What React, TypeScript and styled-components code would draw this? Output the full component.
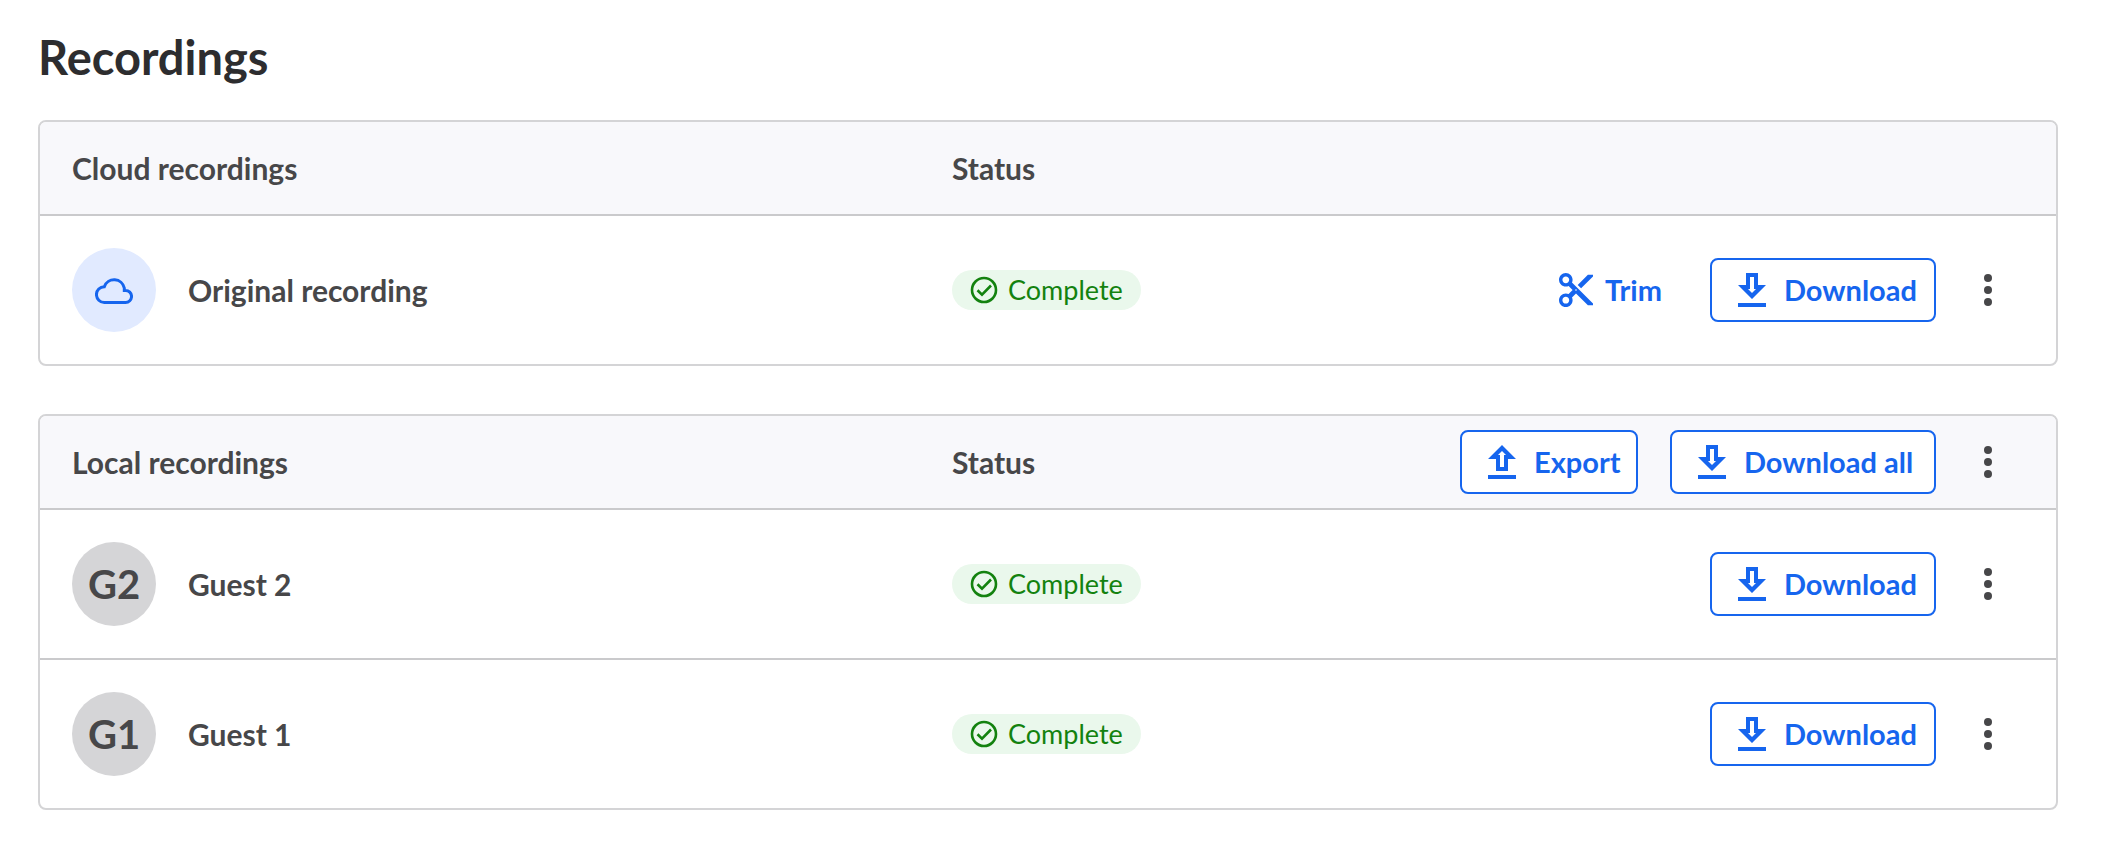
import React from "react";
import styled, { createGlobalStyle } from "styled-components";

const color = {
  blue: "#1665ee",
  blueTint: "#e1eaff",
  heading: "#2d2d2f",
  text: "#474749",
  headBg: "#f8f8fb",
  border: "#d4d4d6",
  divider: "#cacacc",
  avatar: "#d5d5d7",
  green: "#13820f",
  greenTint: "#eaf8ec",
};

const GlobalStyle = createGlobalStyle`
  *, *::before, *::after { box-sizing: border-box; }
  body {
    margin: 0;
    background: #fff;
    color: ${color.text};
    font-family: Lato, "Liberation Sans", sans-serif;
  }
`;

const Page = styled.main`
  padding: 30px 44px 44px 38px;
`;

const Title = styled.h1`
  margin: 0 0 36px;
  font-size: 47px;
  line-height: 54px;
  font-weight: 700;
  color: ${color.heading};
`;

const Sections = styled.div`
  display: flex;
  flex-direction: column;
  gap: 48px;
`;

const Card = styled.section`
  border: 2px solid ${color.border};
  border-radius: 8px;
  overflow: hidden;
`;

const Table = styled.table`
  width: 100%;
  table-layout: fixed;
  border-spacing: 0;
  font-size: 30px;
  line-height: 36px;
  font-weight: 700;
`;

const HeadCell = styled.th<{ $width?: string }>`
  width: ${(p) => p.$width ?? "auto"};
  height: 94px;
  padding: 0 0 0 32px;
  background: ${color.headBg};
  border-bottom: 2px solid ${color.divider};
  text-align: left;
  font-weight: 700;
`;

const BodyRow = styled.tr`
  & + & > td {
    border-top: 2px solid ${color.divider};
  }
`;

const Cell = styled.td`
  padding: 32px 0 32px 32px;
`;

const Person = styled.div`
  display: flex;
  align-items: center;
  gap: 32px;
`;

const Avatar = styled.span<{ $tint?: boolean }>`
  display: flex;
  align-items: center;
  justify-content: center;
  width: 84px;
  height: 84px;
  border-radius: 50%;
  background: ${(p) => (p.$tint ? color.blueTint : color.avatar)};
  color: ${(p) => (p.$tint ? color.blue : color.text)};
  font-size: 40px;
  font-weight: 700;
`;

const Pill = styled.span`
  display: flex;
  align-items: center;
  gap: 10px;
  width: fit-content;
  height: 40px;
  padding: 0 18px;
  border-radius: 20px;
  background: ${color.greenTint};
  color: ${color.green};
  font-size: 27px;
  font-weight: 400;
`;

const Actions = styled.div`
  display: flex;
  align-items: center;
  justify-content: flex-end;
  gap: 32px;
  padding-right: 48px;
`;

const Button = styled.button`
  display: flex;
  align-items: center;
  height: 64px;
  border: 0;
  background: none;
  color: ${color.blue};
  font: inherit;
  font-size: 29px;
  cursor: pointer;
`;

const OutlineButton = styled(Button)<{ $width: number }>`
  gap: 18px;
  min-width: ${(p) => p.$width}px;
  padding: 0 12px 0 26px;
  border: 2px solid ${color.blue};
  border-radius: 8px;
  background: #fff;
`;

const TextButton = styled(Button)`
  gap: 12px;
  padding: 0 16px;
`;

const MenuButton = styled(Button)`
  justify-content: center;
  width: 40px;
  padding: 0;
  color: ${color.text};
`;

const Icon = styled.svg`
  display: block;
  flex: none;
`;

const CloudIcon = () => (
  <Icon width="38" height="28" viewBox="0 0 38 28" fill="none" stroke="currentColor" strokeWidth="3" aria-hidden>
    <path d="M9.4 26.5A7.9 7.9 0 0 1 9.3 10.7A10.4 10.4 0 0 1 29.3 12V14.4H30.5A6.05 6.05 0 0 1 30.5 26.5Z" />
  </Icon>
);

const CheckIcon = () => (
  <Icon width="28" height="28" viewBox="0 0 28 28" fill="none" stroke="currentColor" strokeWidth="2.6" aria-hidden>
    <circle cx="14" cy="14" r="12" />
    <path d="M7.5 14.2L12 18.6L21 9.5" />
  </Icon>
);

const ScissorsIcon = () => (
  <Icon width="34" height="34" viewBox="2 2 20 20" fill="currentColor" aria-hidden>
    <path d="M9.64 7.64c.23-.5.36-1.05.36-1.64 0-2.21-1.79-4-4-4S2 3.79 2 6s1.79 4 4 4c.59 0 1.14-.13 1.64-.36L10 12l-2.36 2.36C7.14 14.13 6.59 14 6 14c-2.21 0-4 1.79-4 4s1.79 4 4 4 4-1.79 4-4c0-.59-.13-1.14-.36-1.64L12 14l7 7h3v-1L9.64 7.64zM6 8c-1.1 0-2-.89-2-2s.9-2 2-2 2 .89 2 2-.9 2-2 2zm0 12c-1.1 0-2-.89-2-2s.9-2 2-2 2 .89 2 2-.9 2-2 2zm6-7.5c-.28 0-.5-.22-.5-.5s.22-.5.5-.5.5.22.5.5-.22.5-.5.5zM19 3l-6 6 2 2 7-7V3z" />
  </Icon>
);

const DownloadIcon = () => (
  <Icon width="28" height="34" viewBox="0 0 28 34" fill="currentColor" fillRule="evenodd" aria-hidden>
    <path d="M8 0H20V12H28L14 26L0 12H8ZM12 4V16H10L14 20L18 16H16V4Z" />
    <path d="M0 30H28V34H0Z" />
  </Icon>
);

const ExportIcon = () => (
  <Icon width="28" height="34" viewBox="0 0 28 34" fill="currentColor" fillRule="evenodd" aria-hidden>
    <path d="M14 0L28 14H20V26H8V14H0ZM14 6L10 10H12V22H16V10H18Z" />
    <path d="M0 30H28V34H0Z" />
  </Icon>
);

const MoreIcon = () => (
  <Icon width="8" height="32" viewBox="0 0 8 32" fill="currentColor" aria-hidden>
    <circle cx="4" cy="4" r="4" />
    <circle cx="4" cy="16" r="4" />
    <circle cx="4" cy="28" r="4" />
  </Icon>
);

const TrimButton = () => (
  <TextButton type="button">
    <ScissorsIcon />
    Trim
  </TextButton>
);

const DownloadButton = () => (
  <OutlineButton type="button" $width={226}>
    <DownloadIcon />
    Download
  </OutlineButton>
);

const More = ({ label }: { label: string }) => (
  <MenuButton type="button" aria-label={label}>
    <MoreIcon />
  </MenuButton>
);

const TableHead = ({ title, children }: { title: string; children?: React.ReactNode }) => (
  <thead>
    <tr>
      <HeadCell scope="col" $width="43.65%">{title}</HeadCell>
      <HeadCell scope="col" $width="20%">Status</HeadCell>
      <HeadCell scope="col" aria-label="Actions">{children}</HeadCell>
    </tr>
  </thead>
);

type RecordingProps = { name: string; initials?: string; canTrim?: boolean };

const Recording = ({ name, initials, canTrim }: RecordingProps) => (
  <BodyRow>
    <Cell>
      <Person>
        <Avatar $tint={!initials}>{initials ?? <CloudIcon />}</Avatar>
        <span>{name}</span>
      </Person>
    </Cell>
    <Cell>
      <Pill>
        <CheckIcon />
        Complete
      </Pill>
    </Cell>
    <Cell>
      <Actions>
        {canTrim && <TrimButton />}
        <DownloadButton />
        <More label={`More options for ${name}`} />
      </Actions>
    </Cell>
  </BodyRow>
);

export default function App() {
  return (
    <>
      <GlobalStyle />
      <Page>
        <Title>Recordings</Title>
        <Sections>
          <Card>
            <Table>
              <TableHead title="Cloud recordings" />
              <tbody>
                <Recording name="Original recording" canTrim />
              </tbody>
            </Table>
          </Card>
          <Card>
            <Table>
              <TableHead title="Local recordings">
                <Actions>
                  <OutlineButton type="button" $width={178}>
                    <ExportIcon />
                    Export
                  </OutlineButton>
                  <OutlineButton type="button" $width={266}>
                    <DownloadIcon />
                    Download all
                  </OutlineButton>
                  <More label="More options for local recordings" />
                </Actions>
              </TableHead>
              <tbody>
                <Recording name="Guest 2" initials="G2" />
                <Recording name="Guest 1" initials="G1" />
              </tbody>
            </Table>
          </Card>
        </Sections>
      </Page>
    </>
  );
}
